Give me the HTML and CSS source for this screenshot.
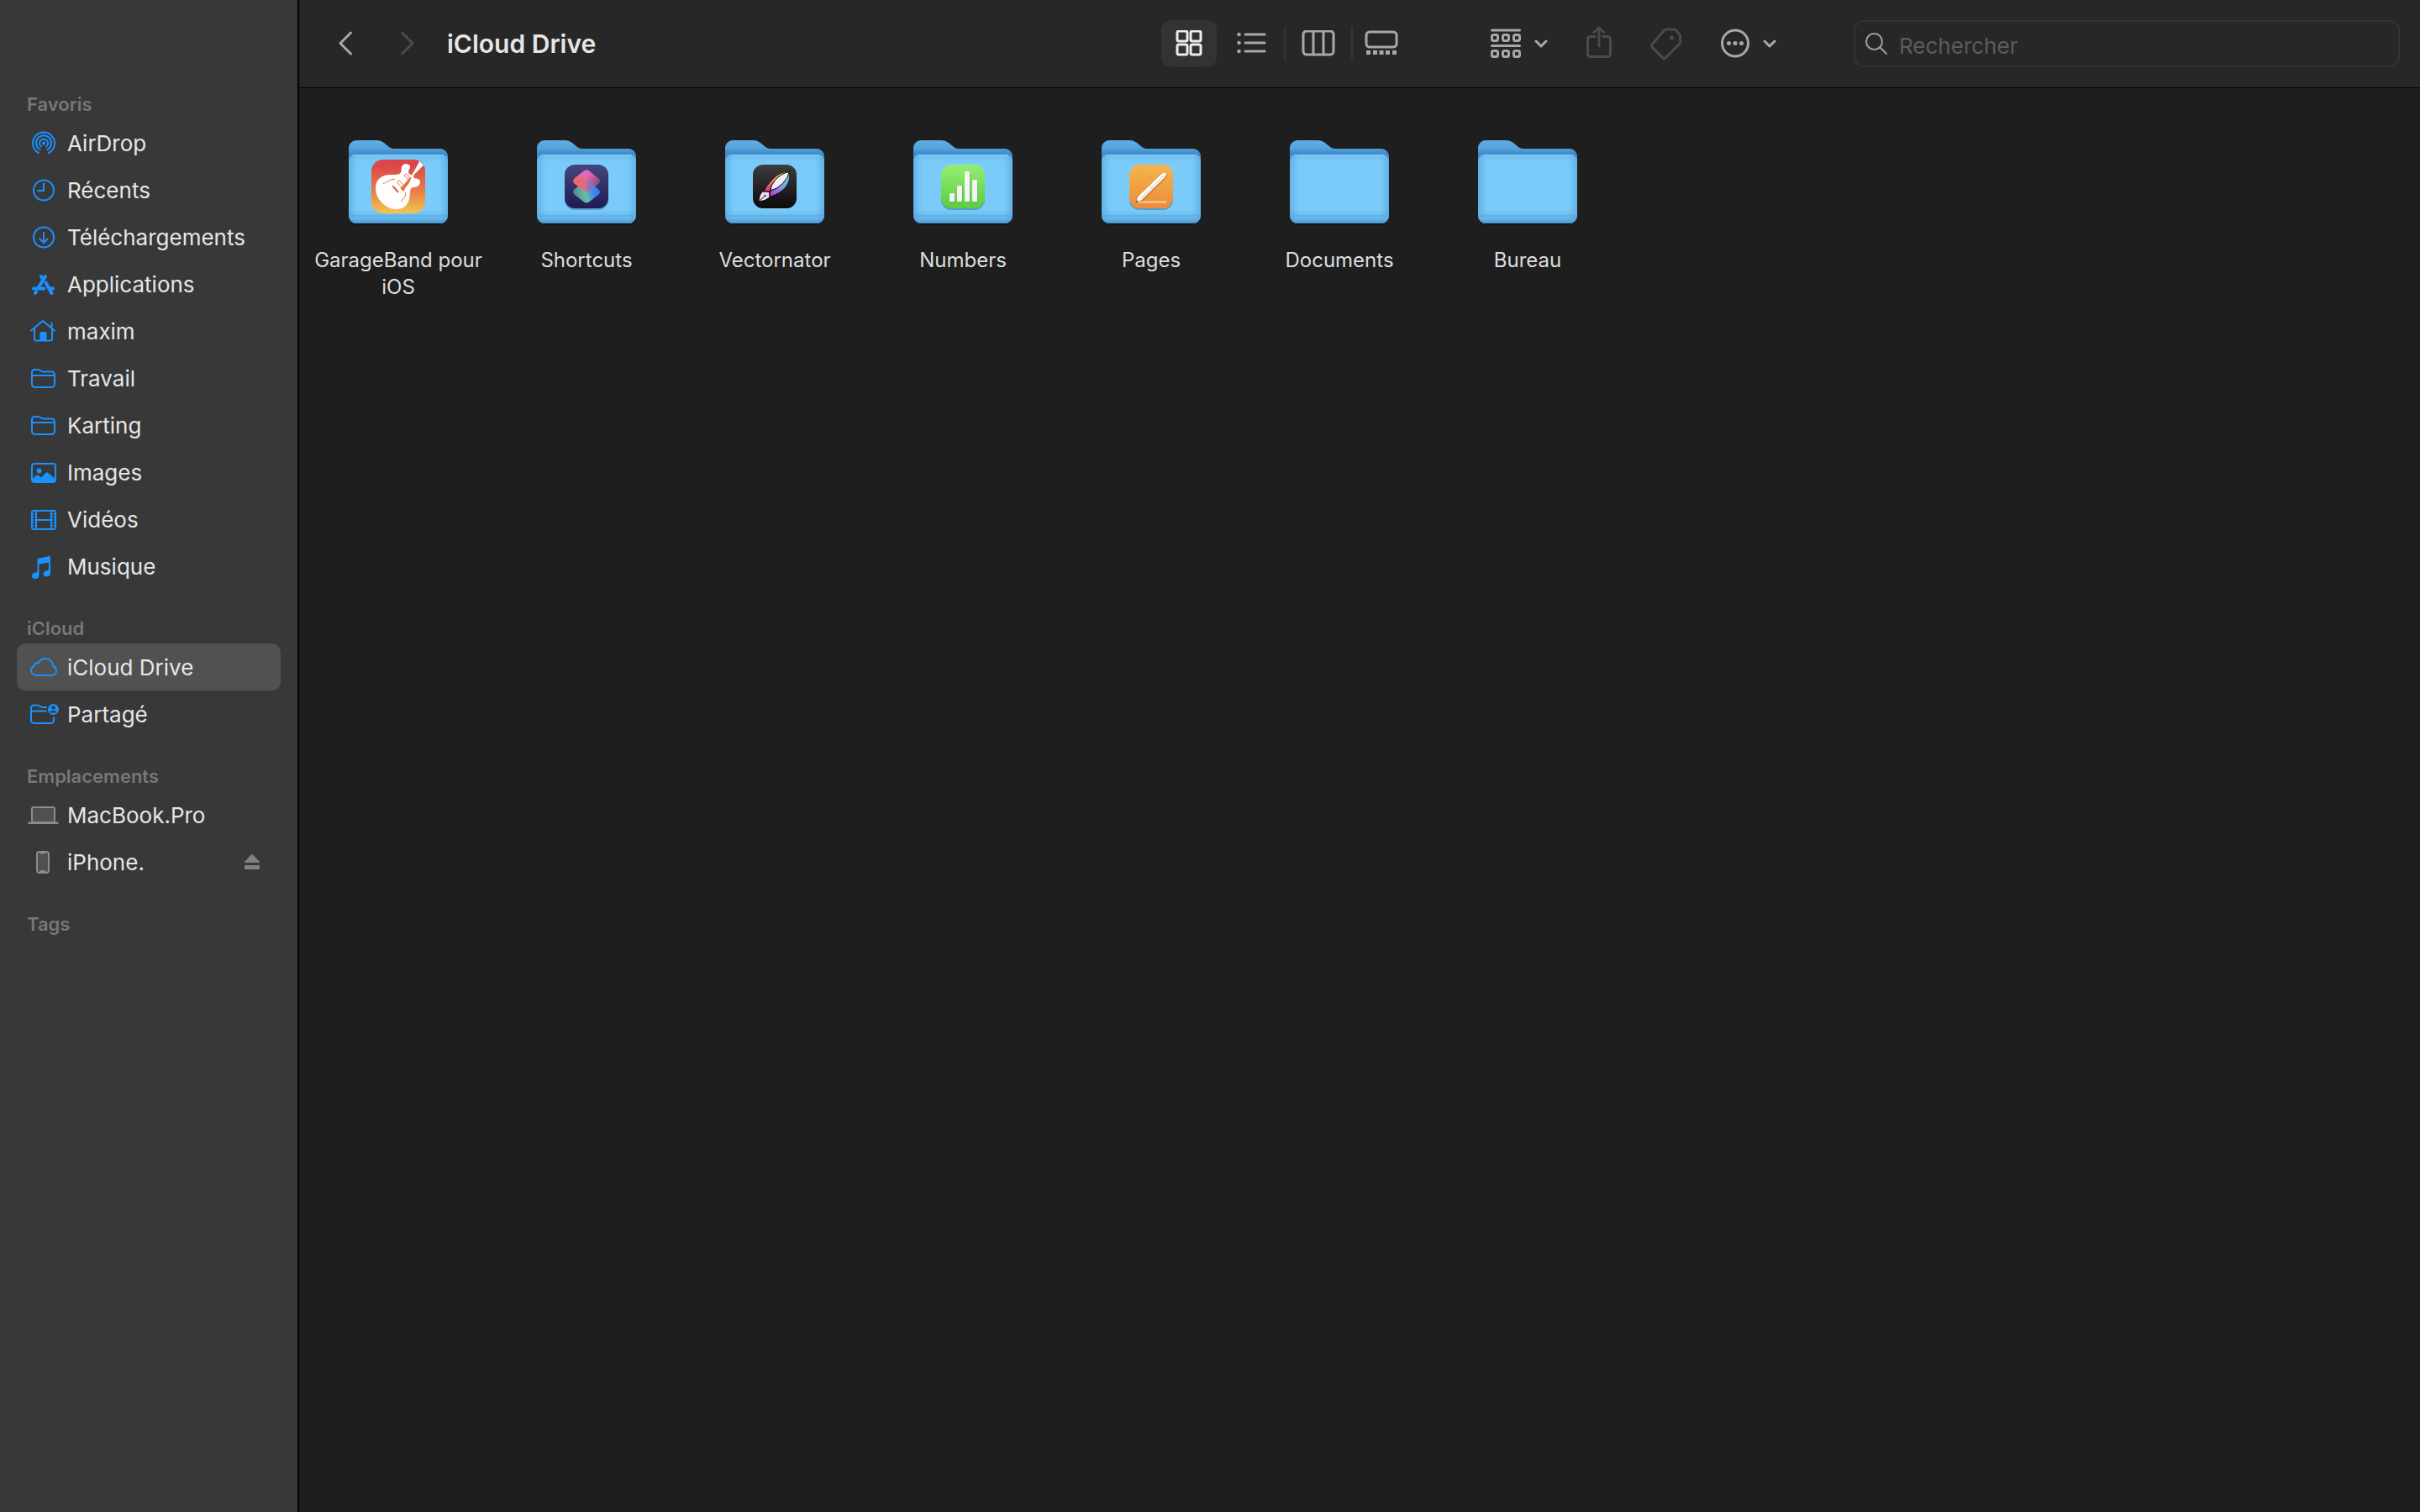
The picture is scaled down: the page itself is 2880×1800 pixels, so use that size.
FILE: index.html
```html
<!DOCTYPE html>
<html lang="fr">

<head>
    <meta charset="UTF-8">
    <meta name="viewport" content="width=device-width, initial-scale=1.0">
    <title>iCloud Drive</title>
    <link rel="stylesheet" href="styles.css">
</head>

<body>
    <!-- Shared shapes and gradients -->
    <svg class="shapes" width="0" height="0" aria-hidden="true">
        <defs>
            <linearGradient id="back-fill" x1="0" y1="0" x2="0" y2="1">
                <stop offset="0" stop-color="#62ade2" />
                <stop offset=".1" stop-color="#56a4dd" />
                <stop offset=".18" stop-color="#3f8bcb" />
                <stop offset="1" stop-color="#3f8bcb" />
            </linearGradient>
            <linearGradient id="front-fill" x1="0" y1="0" x2="0" y2="1">
                <stop offset="0" stop-color="#71c0f0" />
                <stop offset=".12" stop-color="#7bcbfa" />
                <stop offset=".8" stop-color="#7bcbfa" />
                <stop offset=".9" stop-color="#6bbaec" />
                <stop offset="1" stop-color="#62b1e5" />
            </linearGradient>
            <linearGradient id="front-edge">
                <stop offset="0" stop-color="#4f9fd9" stop-opacity=".6" />
                <stop offset=".1" stop-color="#5fb0e5" stop-opacity="0" />
                <stop offset=".9" stop-color="#5fb0e5" stop-opacity="0" />
                <stop offset="1" stop-color="#4f9fd9" stop-opacity=".6" />
            </linearGradient>
            <linearGradient id="garageband-fill" x1="0" y1="0" x2="0" y2="1">
                <stop offset=".1" stop-color="#dc4549" />
                <stop offset=".6" stop-color="#e98048" />
                <stop offset="1" stop-color="#f3c650" />
            </linearGradient>
            <linearGradient id="shortcuts-fill" x1="0" y1="0" x2="0" y2="1">
                <stop offset="0" stop-color="#454779" />
                <stop offset="1" stop-color="#201a55" />
            </linearGradient>
            <linearGradient id="shortcuts-top" x1="0" y1=".5" x2="1" y2=".5">
                <stop offset="0" stop-color="#f0695a" />
                <stop offset=".5" stop-color="#dd6a90" />
                <stop offset="1" stop-color="#7d4a86" />
            </linearGradient>
            <linearGradient id="shortcuts-shine" x1="0" y1="0" x2="0" y2="1">
                <stop offset="0" stop-color="#e666de" />
                <stop offset=".45" stop-color="#e666de" stop-opacity="0" />
            </linearGradient>
            <linearGradient id="shortcuts-bottom" x1="0" y1=".6" x2="1" y2=".4">
                <stop offset="0" stop-color="#4f858d" />
                <stop offset=".45" stop-color="#65c0a5" />
                <stop offset=".75" stop-color="#3f86f0" />
                <stop offset="1" stop-color="#3472f2" />
            </linearGradient>
            <linearGradient id="vector-fill" x1="0" y1="0" x2="0" y2="1">
                <stop offset="0" stop-color="#3d3d3d" />
                <stop offset=".5" stop-color="#252325" />
                <stop offset="1" stop-color="#0b0b0b" />
            </linearGradient>
            <linearGradient id="vector-warm" x1="1" y1="0" x2="0" y2="1">
                <stop offset="0" stop-color="#f5e84d" />
                <stop offset=".45" stop-color="#f09a45" />
                <stop offset="1" stop-color="#dc2290" />
            </linearGradient>
            <linearGradient id="vector-cool" x1="1" y1="0" x2="0" y2="1">
                <stop offset="0" stop-color="#52e0cf" />
                <stop offset=".45" stop-color="#77a5ea" />
                <stop offset="1" stop-color="#cc28d3" />
            </linearGradient>
            <linearGradient id="numbers-fill" x1="0" y1="0" x2="0" y2="1">
                <stop offset="0" stop-color="#93ee73" />
                <stop offset="1" stop-color="#5ccc40" />
            </linearGradient>
            <linearGradient id="pages-fill" x1="0" y1="0" x2="0" y2="1">
                <stop offset="0" stop-color="#f3b54c" />
                <stop offset="1" stop-color="#ec8c3b" />
            </linearGradient>

            <symbol id="folder" viewBox="0 0 128 112">
                <path fill="#111" opacity=".6" d="M6 95h116v3a8 8 0 0 1-8 8H14a8 8 0 0 1-8-8z" />
                <path fill="url(#back-fill)" d="M5 14a9 9 0 0 1 9-9h24c4 0 6 1 9 3l6 5c2 1.500 4 2 7 2h54a9 9 0 0 1 9 9v70H5z" />
                <path fill="url(#front-fill)" d="M13 22h102a8 8 0 0 1 8 8v65a9 9 0 0 1-9 9H14a9 9 0 0 1-9-9V30a8 8 0 0 1 8-8z" />
                <path fill="url(#front-edge)" d="M13 22h102a8 8 0 0 1 8 8v65a9 9 0 0 1-9 9H14a9 9 0 0 1-9-9V30a8 8 0 0 1 8-8z" />
                <path fill="#58a8de" d="M5 94.500h118v1H5zM6.500 99.500h115q-2.500 4.500-7.500 4.500H14q-5 0-7.500-4.500z" />
                <path fill="none" stroke="#3e85bd" stroke-width="1" d="M7 100.500q3 3 7 3h100q4 0 7-3" />
                <path fill="none" stroke="#8fd2fa" stroke-width="1" opacity=".7" d="M10 22.500h108" />
            </symbol>
            <symbol id="side-folder" viewBox="0 0 40 40">
                <path d="M6 13.500a3.500 3.500 0 0 1 3.500-3.500H13c3.500 0 3.500 2.500 6.500 2.500h10a3.500 3.500 0 0 1 3.500 3.500v11.500a3.500 3.500 0 0 1-3.500 3.500h-20A3.500 3.500 0 0 1 6 27.500zM6 17h27" />
            </symbol>
            <symbol id="chevron-down" viewBox="0 0 16 12">
                <path fill="none" stroke="currentColor" stroke-width="3" stroke-linecap="round" stroke-linejoin="round" d="M2 3l6 6 6-6" />
            </symbol>
        </defs>
    </svg>

    <div class="window">
        <aside class="sidebar">
            <nav>
                <h2>Favoris</h2>
                <ul>
                    <li><a href="#">
                        <svg class="icon" viewBox="0 0 40 40"><path d="M14 32a13 13 0 1 1 12 0M15.500 28a9 9 0 1 1 9 0M17 24.500a5 5 0 1 1 6 0" /><circle class="solid" cx="20" cy="20.500" r="2" /></svg>
                        <span>AirDrop</span>
                    </a></li>
                    <li><a href="#">
                        <svg class="icon" viewBox="0 0 40 40"><circle cx="20" cy="20.500" r="12" /><path d="M20 12.500v8.500h-7" /></svg>
                        <span>Récents</span>
                    </a></li>
                    <li><a href="#">
                        <svg class="icon" viewBox="0 0 40 40"><circle cx="20" cy="20.500" r="12" /><path d="M20 15v12M15.500 22.500L20 27l4.500-4.500" /></svg>
                        <span>Téléchargements</span>
                    </a></li>
                    <li><a href="#">
                        <svg class="icon thick" viewBox="0 0 40 40"><path d="M8 25.500h12.500M28 25.500h3M22 11L13 25.500M11 29.500l-1 1.500M17 11l2.500 4M22.500 18.500L29.500 31" /></svg>
                        <span>Applications</span>
                    </a></li>
                    <li><a href="#">
                        <svg class="icon" viewBox="0 0 40 40"><path d="M5 19.500L19 8l14 11.500M9 17v12.500a2 2 0 0 0 2 2h17a2 2 0 0 0 2-2V17M29.500 15v-4.500" /><path class="solid" d="M15.500 32v-9.500q0-1.500 1.500-1.500h5q1.500 0 1.500 1.500V32z" /></svg>
                        <span>maxim</span>
                    </a></li>
                    <li><a href="#">
                        <svg class="icon"><use href="#side-folder" /></svg>
                        <span>Travail</span>
                    </a></li>
                    <li><a href="#">
                        <svg class="icon"><use href="#side-folder" /></svg>
                        <span>Karting</span>
                    </a></li>
                    <li><a href="#">
                        <svg class="icon" viewBox="0 0 40 40"><rect x="6" y="10" width="28" height="22" rx="3" /><circle class="solid" cx="14.500" cy="18.500" r="3" /><path class="solid" d="M6 28.500l5-4.500q1.500-1 3 0l3 2.500 5.500-5.500q1.500-1.300 3 0l8.500 7.500V31q0 1-1.500 1h-25Q6 32 6 31z" /></svg>
                        <span>Images</span>
                    </a></li>
                    <li><a href="#">
                        <svg class="icon" viewBox="0 0 40 40"><rect x="6" y="10" width="28" height="22" rx="2" /><path d="M11 10v22M29 10v22M11 21h18" /><path class="thin" d="M6 14h5M6 17.500h5M6 21h5M6 24.500h5M6 28h5M29 14h5M29 17.500h5M29 21h5M29 24.500h5M29 28h5" /></svg>
                        <span>Vidéos</span>
                    </a></li>
                    <li><a href="#">
                        <svg class="icon" viewBox="0 0 40 40"><path class="solid" d="M12.500 12.500q0-1.500 1.500-1.800L26.500 8q1.500-.3 1.500 1.200V28q0 4.500-4.500 4.500-3.800 0-3.800-3.300 0-3.200 4-4 2.300-.4 2.300-1.700v-8l-11.500 2.300v13q0 4.200-4.500 4.200-4 0-4-3.300t3.700-4q2.800-.5 2.800-2z" /></svg>
                        <span>Musique</span>
                    </a></li>
                </ul>

                <h2>iCloud</h2>
                <ul>
                    <li><a class="selected" href="#" aria-current="page">
                        <svg class="icon" viewBox="0 0 40 40"><path d="M12 30h17c3.500 0 6-2.300 6-5.500 0-2.500-1.500-4.500-4-5.500.2-5-3.800-9-9-9-3.800 0-6.800 2-8 5.200-3.200-.5-5.700 1.500-5.800 4.300C6.200 20.300 5 22 5 24c0 3.500 3 6 7 6z" /></svg>
                        <span>iCloud Drive</span>
                    </a></li>
                    <li><a href="#">
                        <svg class="icon" viewBox="0 0 40 40"><path d="M23 12h-4.500c-3 0-3-2.500-6.500-2.500H8.500A3.500 3.500 0 0 0 5 13v14.500A3.500 3.500 0 0 0 8.500 31h20a3.500 3.500 0 0 0 3.500-3.500V24M5 16.500h18" /><circle class="solid" cx="31.500" cy="14.500" r="6.500" /><circle fill="#383838" stroke="none" cx="31.500" cy="12.500" r="2.300" /><path fill="#383838" stroke="none" d="M27.500 18.500q0-2.500 4-2.500t4 2.500z" /></svg>
                        <span>Partagé</span>
                    </a></li>
                </ul>

                <h2>Emplacements</h2>
                <ul>
                    <li><a href="#">
                        <svg class="icon device" viewBox="0 0 40 40"><rect x="6" y="11" width="27" height="18" rx="2" /><path class="solid" d="M1 28.500h37q0 2.500-2 2.500H3q-2 0-2-2.500z" /></svg>
                        <span>MacBook.Pro</span>
                    </a></li>
                    <li class="mounted"><a href="#">
                        <svg class="icon device" viewBox="0 0 40 40"><rect x="12" y="8" width="14" height="25" rx="3" /><path d="M17 9.500h4M16.500 31h5" /></svg>
                        <span>iPhone.</span>
                    </a>
                    <button class="eject" type="button" aria-label="Éjecter iPhone">
                        <svg width="20" height="20" viewBox="0 0 20 20"><path fill="#828282" d="M8.500 2q1.500-1.500 3 0l7 7.500q1 1.500-.5 1.500H2q-1.500 0-.5-1.500z" /><rect fill="#828282" x="1" y="14" width="18" height="5" rx="1" /></svg>
                    </button></li>
                </ul>

                <h2>Tags</h2>
            </nav>
        </aside>

        <main>
            <header class="toolbar">
                <div class="history">
                    <button type="button" aria-label="Précédent"><svg width="18" height="32" viewBox="0 0 18 32"><path d="M15.500 3L3 15.500 15.500 28" /></svg></button>
                    <button type="button" aria-label="Suivant" disabled><svg width="18" height="32" viewBox="0 0 18 32"><path d="M2.500 3L15 15.500 2.500 28" /></svg></button>
                </div>
                <h1>iCloud Drive</h1>

                <div class="views">
                    <button class="active" type="button" aria-label="Icônes">
                        <svg width="32" height="32" viewBox="0 0 32 32"><rect x="2" y="1" width="12" height="12" rx="2" /><rect x="18" y="1" width="12" height="12" rx="2" /><rect x="2" y="17" width="12" height="12" rx="2" /><rect x="18" y="17" width="12" height="12" rx="2" /></svg>
                    </button>
                    <button type="button" aria-label="Liste">
                        <svg width="36" height="32" viewBox="0 0 36 32"><path d="M11 5h23M11 15h23M11 25h23" /><circle class="solid" cx="3.500" cy="5" r="2.300" /><circle class="solid" cx="3.500" cy="15" r="2.300" /><circle class="solid" cx="3.500" cy="25" r="2.300" /></svg>
                    </button>
                    <span class="divider"></span>
                    <button type="button" aria-label="Colonnes">
                        <svg width="40" height="32" viewBox="0 0 40 32"><rect x="2" y="1" width="36" height="28" rx="4" /><path d="M14 1v28M26 1v28" /></svg>
                    </button>
                    <span class="divider"></span>
                    <button class="gallery" type="button" aria-label="Galerie">
                        <svg width="40" height="32" viewBox="0 0 40 32"><rect x="2" y="2" width="36" height="18" rx="4" /><path class="solid" d="M2 24h5v5H2zM10 24h5v5h-5zM17.500 24h5v5h-5zM25 24h5v5h-5zM33 24h5v5h-5z" /></svg>
                    </button>
                </div>

                <div class="tools">
                    <button type="button" aria-label="Regrouper">
                        <svg width="36" height="38" viewBox="0 0 36 38"><path d="M1.500 3h33M1.500 21.500h33" /><rect x="1.500" y="8.500" width="7" height="7" rx="2" /><rect x="14.500" y="8.500" width="7" height="7" rx="2" /><rect x="27.500" y="8.500" width="7" height="7" rx="2" /><rect x="1.500" y="27.500" width="7" height="7" rx="2" /><rect x="14.500" y="27.500" width="7" height="7" rx="2" /><rect x="27.500" y="27.500" width="7" height="7" rx="2" /></svg>
                        <svg width="16" height="12"><use href="#chevron-down" /></svg>
                    </button>
                    <button type="button" aria-label="Partager" disabled>
                        <svg width="30" height="42" viewBox="0 0 30 42"><path d="M10.500 12.500H4.500a3 3 0 0 0-3 3v18a3 3 0 0 0 3 3h21a3 3 0 0 0 3-3v-18a3 3 0 0 0-3-3h-6M15 24V2M9 7.500L15 2l6 5.500" /></svg>
                    </button>
                    <button type="button" aria-label="Tags" disabled>
                        <svg width="38" height="40" viewBox="0 0 38 40"><path d="M19 3h9q1.500 0 2.500 1l4 4.500q1 1 1 2.500v7q0 1.500-1 2.500L18 37q-1.500 1.500-3 0L2 24q-1.500-1.500 0-3L16.500 4q1-1 2.500-1z" /><circle class="solid" cx="25.500" cy="13" r="2.500" /></svg>
                    </button>
                    <button type="button" aria-label="Actions">
                        <svg width="34" height="36" viewBox="0 0 34 36"><circle cx="17" cy="17.500" r="15.500" /><circle class="solid" cx="9.500" cy="17.500" r="2.500" /><circle class="solid" cx="17" cy="17.500" r="2.500" /><circle class="solid" cx="24.500" cy="17.500" r="2.500" /></svg>
                        <svg width="16" height="12"><use href="#chevron-down" /></svg>
                    </button>
                </div>

                <label class="search">
                    <svg width="28" height="28" viewBox="0 0 28 28"><circle cx="10.500" cy="11.500" r="9.500" /><path d="M17.500 18.500l7.500 7.500" /></svg>
                    <input type="search" placeholder="Rechercher" aria-label="Rechercher">
                </label>
            </header>

            <div class="files">
                <a class="file" href="#">
                    <svg viewBox="0 0 128 112">
                        <use href="#folder" />
                        <rect x="32" y="28" width="64" height="64" rx="14" fill="url(#garageband-fill)" />
                        <g transform="translate(-50 -12) scale(.3333)">
                            <path fill="#fff" d="M418 126l14 14-34 34q-4 8 0 12l12 2q12 4 10 14-3 14-18 16-12 0-16 6-2 8-3 20 0 26-14 40-14 14-36 13-30-1-51-24-21-22-21-50 0-26 18-39 14-11 40-10 18 1 26-2 10-6 8-18 0-14 12-18 14-2 19 6 2 7-4 14-3 8 0 14l10 6z" />
                            <path fill="#e37447" d="M389 182q-6 22-16 32-10 10-10 20-8-2-14-12l12-12 22-26z" />
                            <path fill="none" stroke="#e07247" stroke-width="3" d="M344 194l18 18-7 7-17-17zM369 170l17 16-6 7-17-16zM287 204q6 2 12-3 14-12 32-11M354 271q-1-6 5-10 10-7 9-24" />
                            <path stroke="#da5747" stroke-width="6" d="M322 214l20 23" />
                        </g>
                    </svg>
                    <span>GarageBand pour iOS</span>
                </a>
                <a class="file" href="#">
                    <svg viewBox="0 0 128 112">
                        <use href="#folder" />
                        <rect x="38" y="36" width="52" height="52" rx="12" fill="#235b8c" opacity=".4" />
                        <rect x="38" y="34" width="52" height="52" rx="12" fill="url(#shortcuts-fill)" />
                        <path fill="url(#shortcuts-bottom)" d="M61 54.500q3-2 6 0l11.500 9q3 3 0 6L67 78.500q-3 2-6 0l-11.500-9q-3-3 0-6z" />
                        <path fill="url(#shortcuts-top)" d="M61 41.500q3-2 6 0l11.500 9q3 3 0 6L67 65.500q-3 2-6 0l-11.500-9q-3-3 0-6z" />
                        <path fill="url(#shortcuts-shine)" d="M61 41.500q3-2 6 0l11.500 9q3 3 0 6L67 65.500q-3 2-6 0l-11.500-9q-3-3 0-6z" />
                        <path fill="#4f83e8" opacity=".5" d="M64 53q2-.5 4 1l7.500 5.500L68 65q-2 1.500-4 1z" />
                    </svg>
                    <span>Shortcuts</span>
                </a>
                <a class="file" href="#">
                    <svg viewBox="0 0 128 112">
                        <use href="#folder" />
                        <rect x="38" y="34" width="52" height="52" rx="12" fill="url(#vector-fill)" />
                        <g transform="translate(-258 -12) scale(.3333)">
                            <path fill="url(#vector-warm)" stroke="#000" stroke-width="2" d="M1018 163q-34 0-58 26-26 26-33 46l22-2q0-18 20-40 22-20 49-30z" />
                            <path fill="url(#vector-cool)" stroke="#000" stroke-width="2" d="M1018 163q6 30-12 54-18 24-58 36l1-20q26-8 44-28 18-20 25-42z" />
                            <path fill="#f4f0f7" stroke="#000" stroke-width="3" d="M1018 163q-32 8-50 30-17 18-17 38 24-6 44-26 20-20 23-42z" />
                            <path fill="#e9ddf0" stroke="#000" stroke-width="3" d="M921 234l26 1 1 20-16 10-24 6 4-22z" />
                            <path stroke="#111" stroke-width="3" d="M910 269l22-20" />
                            <circle fill="#111" cx="932" cy="249" r="3" />
                        </g>
                    </svg>
                    <span>Vectornator</span>
                </a>
                <a class="file" href="#">
                    <svg viewBox="0 0 128 112">
                        <use href="#folder" />
                        <rect x="38" y="36" width="52" height="52" rx="12" fill="#235b8c" opacity=".4" />
                        <rect x="38" y="34" width="52" height="52" rx="12" fill="url(#numbers-fill)" />
                        <g fill="#2f9a2a" opacity=".3">
                            <rect x="49" y="69" width="6" height="10" rx="1" />
                            <rect x="58" y="60" width="6" height="19" rx="1" />
                            <rect x="67" y="43" width="6" height="36" rx="1" />
                            <rect x="76" y="53" width="6" height="26" rx="1" />
                        </g>
                        <g fill="#f5f3f8">
                            <rect x="48" y="68" width="6" height="10" rx="1" />
                            <rect x="57" y="59" width="6" height="19" rx="1" />
                            <rect x="66" y="42" width="6" height="36" rx="1" />
                            <rect x="75" y="52" width="6" height="26" rx="1" />
                        </g>
                    </svg>
                    <span>Numbers</span>
                </a>
                <a class="file" href="#">
                    <svg viewBox="0 0 128 112">
                        <use href="#folder" />
                        <rect x="38" y="36" width="52" height="52" rx="12" fill="#235b8c" opacity=".4" />
                        <rect x="38" y="34" width="52" height="52" rx="12" fill="url(#pages-fill)" />
                        <path stroke="#f9cf9c" stroke-width="2" d="M48 78.500h34" />
                        <path fill="#c6742d" opacity=".5" d="M82 46q2 1-1 5L55 77l-6 2z" />
                        <path fill="#fff" d="M80.500 43.500q2.500 1-1 6L52.500 76l-6.500 3 2.500-7L75 46.500q4-3.500 5.500-3z" />
                        <path stroke="#c3c5ca" stroke-width="1" d="M52 74l27-27M62 59l4 4" />
                        <path fill="#6c6253" d="M45.500 79.500l1.500-3.500 2 2z" />
                    </svg>
                    <span>Pages</span>
                </a>
                <a class="file" href="#">
                    <svg viewBox="0 0 128 112"><use href="#folder" /></svg>
                    <span>Documents</span>
                </a>
                <a class="file" href="#">
                    <svg viewBox="0 0 128 112"><use href="#folder" /></svg>
                    <span>Bureau</span>
                </a>
            </div>
        </main>
    </div>
</body>

</html>
```
FILE: styles.css
```css
* {
    box-sizing: border-box;
}

body {
    margin: 0;
    font-family: Inter, "Liberation Sans", sans-serif;
    font-size: 26px;
    color: #e6e6e6;
    background-color: #1e1e1e;
}

a {
    color: inherit;
    text-decoration: none;
}

button {
    display: flex;
    align-items: center;
    justify-content: center;
    padding: 0;
    border: 0;
    background: none;
    color: #a8a8a8;
    cursor: pointer;
}

button:disabled {
    color: #4b4b4b;
    cursor: default;
}

.shapes {
    position: absolute;
}

.window {
    display: flex;
    min-height: 100vh;
}

/* Sidebar */
.sidebar {
    flex: 0 0 356px;
    padding: 78px 20px 0;
    background-color: #383838;
    border-right: 2px solid #000;
}

.sidebar h2 {
    margin: 0;
    padding: 28px 12px 0;
    font-size: 22px;
    font-weight: 600;
    line-height: 36px;
    color: #777;
}

.sidebar ul {
    list-style: none;
    margin: 0;
    padding: 0;
}

.sidebar a {
    display: flex;
    align-items: center;
    gap: 8px;
    height: 56px;
    padding-left: 12px;
    border-radius: 10px;
}

.sidebar a.selected {
    background-color: #515151;
}

.mounted {
    display: flex;
    padding-right: 24px;
}

.mounted a {
    flex: 1;
}

.icon {
    width: 40px;
    height: 40px;
    fill: none;
    stroke: #1a91ff;
    stroke-width: 2;
    stroke-linecap: round;
    stroke-linejoin: round;
    color: #1a91ff;
}

.icon.thick {
    stroke-width: 4;
}

.icon .thin {
    stroke-width: 1;
}

.icon.device {
    fill: #505050;
    stroke: #8c8c8c;
    color: #8c8c8c;
}

.icon .solid {
    fill: currentColor;
    stroke: none;
}

/* Toolbar */
main {
    flex: 1;
    min-width: 0;
}

.toolbar {
    display: flex;
    align-items: center;
    height: 105px;
    padding: 0 24px 0 46px;
    background-color: #272727;
    border-bottom: 1px solid #000;
}

.toolbar svg {
    fill: none;
    stroke: currentColor;
    stroke-width: 3;
    stroke-linecap: round;
    stroke-linejoin: round;
}

.toolbar .solid {
    fill: currentColor;
    stroke: none;
}

.history {
    display: flex;
    gap: 56px;
}

.toolbar h1 {
    flex: 1;
    margin: 0 0 0 38px;
    font-size: 30px;
    font-weight: 600;
    line-height: 36px;
    white-space: nowrap;
}

.views {
    display: flex;
    align-items: center;
    gap: 6px;
    margin-right: 102px;
}

.views button {
    width: 66px;
    height: 56px;
    border-radius: 12px;
}

.views button.active {
    margin-right: 2px;
    background-color: #333;
    color: #ededed;
}

.views button.gallery {
    width: 56px;
}

.divider {
    width: 2px;
    height: 40px;
    background-color: #353535;
}

.tools {
    display: flex;
    align-items: center;
    gap: 46px;
    margin-right: 92px;
}

.tools button {
    gap: 16px;
}

.search {
    display: flex;
    align-items: center;
    gap: 12px;
    flex: 0 1 650px;
    height: 56px;
    padding: 0 12px;
    border: 2px solid #333;
    border-radius: 12px;
    color: #a0a0a0;
}

.toolbar .search svg {
    stroke-width: 2;
}

.search input {
    flex: 1;
    min-width: 0;
    padding: 4px 0 0;
    border: 0;
    outline: 0;
    background: none;
    font: inherit;
    color: #e6e6e6;
}

.search input::placeholder {
    color: #5c5c5c;
}

/* Folder grid */
.files {
    display: grid;
    grid-template-columns: repeat(auto-fill, 224px);
    row-gap: 40px;
    padding: 57px 6px;
}

.file {
    display: flex;
    flex-direction: column;
    align-items: center;
    gap: 20px;
    padding: 0 8px;
    font-size: 24px;
    line-height: 32px;
    text-align: center;
    color: #dedede;
}

.file svg {
    width: 128px;
    height: 112px;
}
```
